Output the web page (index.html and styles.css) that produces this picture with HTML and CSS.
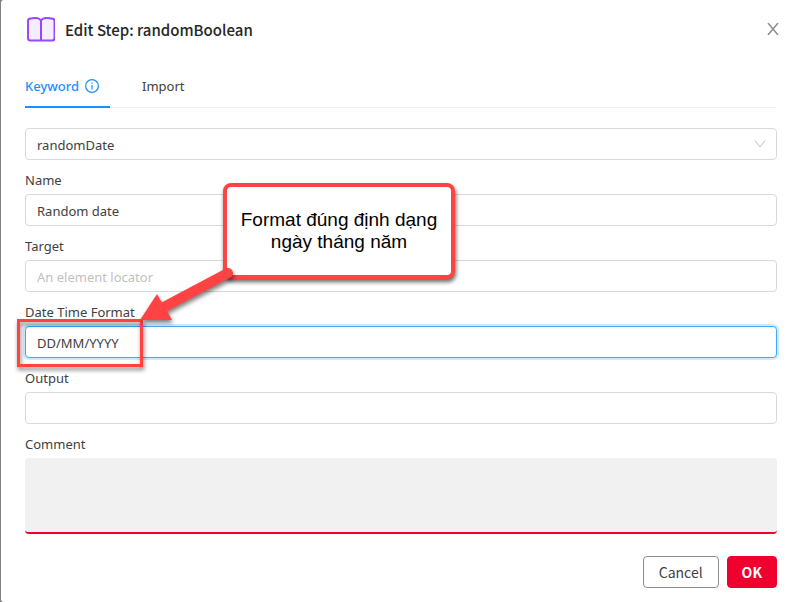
FILE: index.html
```html
<!DOCTYPE html>
<html lang="en">
<head>
<meta charset="utf-8">
<meta name="viewport" content="width=device-width, initial-scale=1">
<title>Edit Step: randomBoolean</title>
<link rel="stylesheet" href="styles.css">
</head>
<body>
<main class="modal" role="dialog" aria-labelledby="dialog-title">
  <header class="modal-header">
    <svg class="book" viewBox="0 0 30 26" width="30" height="26" aria-hidden="true">
      <path d="M16 5C15 2.500 13 2 10.500 2C8 2 7 2.500 5.500 2.500C3.500 2.500 3 3.500 3 5V22Q3 24.500 5.500 24.500H27Q29.500 24.500 29.500 22V5C29.500 3.500 28.500 2.500 26.500 2.500C25 2.500 24 2 21.500 2C19 2 17 2.500 16 5Z"/>
      <path d="M16 5V24.500"/>
    </svg>
    <h1 id="dialog-title">Edit Step: randomBoolean</h1>
    <button class="close" type="button" aria-label="Close">
      <svg viewBox="0 0 12 12" width="12" height="12" aria-hidden="true"><path d="M1 0L11 12M11 0L1 12"/></svg>
    </button>
  </header>

  <nav class="tabs">
    <a class="tab active" href="#keyword">Keyword
      <svg viewBox="0 0 14 14" width="14" height="14" aria-hidden="true"><circle cx="7" cy="7" r="6.400"/><path d="M7 6V10.500M7 3.500V4.700"/></svg>
    </a>
    <a class="tab" href="#import">Import</a>
  </nav>

  <form class="form">
    <div class="select">
      <select class="control" aria-label="Keyword"><option>randomDate</option></select>
      <svg viewBox="0 0 12 8" width="12" height="8" aria-hidden="true"><path d="M1 0.500L6 7L11 0.500"/></svg>
    </div>
    <div class="field">
      <label for="name">Name</label>
      <input class="control" id="name" type="text" value="Random date">
    </div>
    <div class="field">
      <label for="target">Target</label>
      <input class="control" id="target" type="text" placeholder="An element locator">
    </div>
    <div class="field annotated">
      <label for="format">Date Time Format</label>
      <input class="control focused" id="format" type="text" value="DD/MM/YYYY">
      <div class="highlight"></div>
      <div class="callout">Format đúng định dạng<br>ngày tháng năm</div>
      <svg class="arrow" viewBox="0 0 100 62" width="100" height="62" aria-hidden="true">
        <path d="M88 13L22 48" class="shaft"/>
        <path d="M0 60L17 34L32 60Z" class="head"/>
      </svg>
    </div>
    <div class="field">
      <label for="output">Output</label>
      <input class="control" id="output" type="text">
    </div>
    <div class="field">
      <label for="comment">Comment</label>
      <textarea class="comment" id="comment"></textarea>
    </div>
  </form>

  <footer class="actions">
    <button class="button" type="button">Cancel</button>
    <button class="button primary" type="button">OK</button>
  </footer>
</main>
</body>
</html>
```
FILE: styles.css
```css
* {
  box-sizing: border-box;
}

body {
  margin: 0;
  padding-left: 1px;
  background: #808080;
  color: #404040;
  font: 13px/22px "Noto Sans", sans-serif;
}

.modal {
  min-height: 100vh;
  padding: 16px 21px 14px 24px;
  background: #fff;
  border-radius: 3px 0 0 3px;
}

.modal-header {
  display: flex;
  align-items: center;
  gap: 10px;
  height: 26px;
}

.book {
  fill: #f5eeff;
  stroke: #9747ff;
  stroke-width: 2;
}

h1 {
  flex: 1;
  margin: 0;
  padding-top: 2px;
  color: #262626;
  font: 500 15px/22px "Noto Sans CJK SC", "Noto Sans", sans-serif;
}

.close {
  display: flex;
  padding: 0;
  margin-right: -2px;
  border: 0;
  background: none;
}

.close svg {
  fill: none;
  stroke: #8c8c8c;
  stroke-width: 1.5;
}

.tabs {
  display: flex;
  gap: 32px;
  margin-top: 22px;
  border-bottom: 1px solid #f0f0f0;
}

.tab {
  display: flex;
  align-items: center;
  gap: 6px;
  height: 44px;
  margin-bottom: -1px;
  padding-top: 2px;
  border-bottom: 2px solid transparent;
  color: #404040;
  text-decoration: none;
}

.tab.active {
  padding-right: 11px;
  color: #1890ff;
  border-color: #1890ff;
  font-weight: 500;
}

.tab svg {
  fill: none;
  stroke: #1890ff;
  stroke-width: 1.2;
}

.form {
  display: flex;
  flex-direction: column;
  gap: 9px;
  margin-top: 20px;
}

.field {
  display: flex;
  flex-direction: column;
  gap: 3px;
}

.control {
  width: 100%;
  height: 32px;
  padding: 2px 11px 0;
  border: 1px solid #d9d9d9;
  border-radius: 4px;
  outline: 0;
  appearance: none;
  background: #fff;
  color: #404040;
  font: inherit;
}

.control::placeholder {
  color: #bfbfbf;
}

.control.focused {
  border-color: #40a9ff;
  box-shadow: 0 0 0 2px #d1e9ff;
}

.select {
  display: grid;
  align-items: center;
}

.select > * {
  grid-area: 1 / 1;
}

.select svg {
  justify-self: end;
  margin-right: 11px;
  fill: none;
  stroke: #bfbfbf;
  pointer-events: none;
}

.comment {
  height: 76px;
  padding: 4px 11px;
  border: 0;
  border-bottom: 2px solid #f0002f;
  border-radius: 4px;
  outline: 0;
  background: #f1f1f1;
  color: inherit;
  font: inherit;
  resize: none;
}

.annotated {
  position: relative;
  z-index: 1;
}

.highlight {
  position: absolute;
  top: 18px;
  left: -8px;
  width: 126px;
  height: 48px;
  border: 3px solid #ff4343;
  filter: drop-shadow(1px 3px 2px rgb(0 0 0 / 50%));
  pointer-events: none;
}

.callout {
  position: absolute;
  top: -118px;
  left: 198px;
  display: flex;
  align-items: center;
  justify-content: center;
  width: 232px;
  height: 96px;
  border: 4px solid #ff4343;
  border-radius: 8px;
  background: #fff;
  box-shadow: 1px 3px 4px rgb(0 0 0 / 60%);
  color: #000;
  font: 19px/22px "Liberation Sans", Arial, sans-serif;
  text-align: center;
}

.arrow {
  position: absolute;
  top: -41px;
  left: 115px;
  overflow: visible;
  filter: drop-shadow(1px 3px 2px rgb(0 0 0 / 50%));
  pointer-events: none;
}

.shaft {
  fill: none;
  stroke: #ff4343;
  stroke-width: 10;
  stroke-linecap: round;
}

.head {
  fill: #ff4343;
}

.actions {
  display: flex;
  justify-content: flex-end;
  gap: 8px;
  margin-top: 22px;
}

.button {
  height: 32px;
  padding: 0 15px;
  border: 1px solid #8c8c8c;
  border-radius: 4px;
  background: #fff;
  color: #404040;
  font: 14px/22px "Noto Sans CJK SC", "Noto Sans", sans-serif;
}

.button.primary {
  padding: 0 14px;
  border-color: #f0002f;
  background: #f0002f;
  color: #fff;
  font-weight: 700;
}
```
